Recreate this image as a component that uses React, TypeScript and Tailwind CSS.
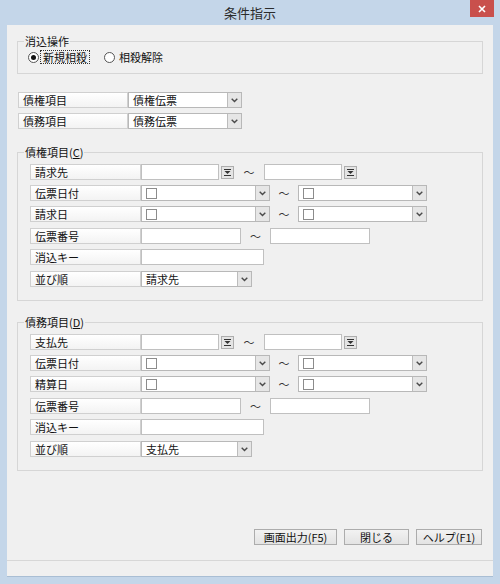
import React from 'react';

const jp = "font-['Noto_Sans_CJK_JP','Noto_Sans_CJK_SC',sans-serif]";

const Chevron: React.FC = () => (
  <svg width="7" height="5" viewBox="0 0 7 5">
    <path d="M0.7 0.8 L3.5 3.6 L6.3 0.8" stroke="#4a4a4a" strokeWidth="1.4" fill="none" />
  </svg>
);

const DropBtn: React.FC = () => (
  <div className="w-[14px] h-[14px] shrink-0 flex items-center justify-center bg-[#e6e6e6] border-l border-[#bcbcbc]">
    <Chevron />
  </div>
);

const Label: React.FC<{ text: React.ReactNode; w?: string }> = ({ text, w = 'w-[111px]' }) => (
  <div
    className={`${w} h-[16px] shrink-0 border border-[#d0d0d0] bg-linear-to-b from-white to-[#f3f3f3] pl-[4px] text-[11px] leading-[14px] text-[#111]`}
  >
    {text}
  </div>
);

const Combo: React.FC<{ w: string; text?: string; check?: boolean }> = ({ w, text, check }) => (
  <div className={`${w} h-[16px] shrink-0 flex items-center border border-[#b8b8b8] bg-white`}>
    <div className="flex-1 flex items-center pl-[4px] text-[11px] leading-[14px] text-[#111]">
      {check && <div className="w-[11px] h-[11px] border border-[#8c8c8c] bg-white" />}
      {text}
    </div>
    <DropBtn />
  </div>
);

const Input: React.FC<{ w: string }> = ({ w }) => (
  <div className={`${w} h-[16px] shrink-0 border border-[#c0c0c0] bg-white`} />
);

const RefBtn: React.FC = () => (
  <div className="ml-[2px] w-[13px] h-[13px] shrink-0 flex items-center justify-center bg-[#e4e4e4] border border-[#adadad]">
    <svg width="7" height="7" viewBox="0 0 7 7">
      <rect x="0" y="0" width="7" height="1" fill="#333" />
      <path d="M0.5 2 L6.5 2 L3.5 5 Z" fill="#333" />
      <rect x="0" y="6" width="7" height="1" fill="#333" />
    </svg>
  </div>
);

const Tilde: React.FC<{ w: string }> = ({ w }) => (
  <div className={`${w} shrink-0 text-center text-[11px] leading-[16px] text-[#333]`}>～</div>
);

const Row: React.FC<{ mt: string; children: React.ReactNode }> = ({ mt, children }) => (
  <div className={`${mt} flex items-center h-[16px]`}>{children}</div>
);

const Group: React.FC<{ title: string; hot: string; party: string; dateLabel: string; mt: string }> = ({
  title,
  hot,
  party,
  dateLabel,
  mt,
}) => (
  <fieldset className={`${mt} ml-[10px] w-[466px] border border-[#d6d6d6] pl-[12px] pb-[13px]`}>
    <legend className="ml-[-6px] px-[1px] text-[11px] leading-[16px] text-[#111]">
      {title}(<span className="underline">{hot}</span>)
    </legend>
    <Row mt="mt-[4px]">
      <Label text={party} />
      <Input w="w-[78px]" />
      <RefBtn />
      <Tilde w="w-[30px]" />
      <Input w="w-[78px]" />
      <RefBtn />
    </Row>
    <Row mt="mt-[5px]">
      <Label text="伝票日付" />
      <Combo w="w-[129px]" check />
      <Tilde w="w-[28px]" />
      <Combo w="w-[129px]" check />
    </Row>
    <Row mt="mt-[5px]">
      <Label text={dateLabel} />
      <Combo w="w-[129px]" check />
      <Tilde w="w-[28px]" />
      <Combo w="w-[129px]" check />
    </Row>
    <Row mt="mt-[6px]">
      <Label text="伝票番号" />
      <Input w="w-[100px]" />
      <Tilde w="w-[29px]" />
      <Input w="w-[100px]" />
    </Row>
    <Row mt="mt-[5px]">
      <Label text="消込キー" />
      <Input w="w-[123px]" />
    </Row>
    <Row mt="mt-[6px]">
      <Label text="並び順" />
      <Combo w="w-[111px]" text={party} />
    </Row>
  </fieldset>
);

const Radio: React.FC<{ on?: boolean }> = ({ on }) => (
  <div className="w-[11px] h-[11px] rounded-full border border-[#555] bg-white flex items-center justify-center shrink-0">
    {on && <div className="w-[5px] h-[5px] rounded-full bg-[#111]" />}
  </div>
);

const Button: React.FC<{ w: string; children: React.ReactNode }> = ({ w, children }) => (
  <div
    className={`${w} h-[16px] border border-[#acacac] bg-linear-to-b from-[#f2f2f2] to-[#e3e3e3] flex items-center justify-center text-[11px] leading-[14px] text-[#111]`}
  >
    {children}
  </div>
);

export default function App() {
  return (
    <div className={`${jp} w-[500px] h-[584px] bg-[#c4d6e9] flex flex-col`}>
      <div className="relative h-[25px] shrink-0 flex items-center justify-center">
        <span className="text-[13px] leading-[16px] text-[#2b2b2b] mt-[1px]">条件指示</span>
        <div className="absolute right-[6px] top-0 w-[24px] h-[17px] bg-[#c9504c] flex items-center justify-center">
          <svg width="8" height="8" viewBox="0 0 8 8">
            <path d="M1 1 L7 7 M7 1 L1 7" stroke="white" strokeWidth="1.6" />
          </svg>
        </div>
      </div>

      <div className="mx-[7px] flex-1 flex flex-col bg-[#f0f0f0] border-b border-[#a9bed4]">
        <fieldset className="mt-[8px] ml-[10px] w-[466px] border border-[#d6d6d6] pl-[10px] pb-[8px]">
          <legend className="ml-[-4px] px-[1px] text-[11px] leading-[16px] text-[#111]">消込操作</legend>
          <div className="h-[16px] flex items-center text-[11px] text-[#111]">
            <Radio on />
            <span className="ml-[1px] px-[2px] border border-dotted border-[#333] leading-[12px]">新規相殺</span>
            <div className="ml-[14px]">
              <Radio />
            </div>
            <span className="ml-[4px] leading-[12px]">相殺解除</span>
          </div>
        </fieldset>

        <div className="mt-[18px] ml-[11px] flex h-[16px]">
          <Label text="債権項目" w="w-[110px]" />
          <Combo w="w-[114px]" text="債権伝票" />
        </div>
        <div className="mt-[5px] ml-[11px] flex h-[16px]">
          <Label text="債務項目" w="w-[110px]" />
          <Combo w="w-[114px]" text="債務伝票" />
        </div>

        <Group mt="mt-[15px]" title="債権項目" hot="C" party="請求先" dateLabel="請求日" />
        <Group mt="mt-[13px]" title="債務項目" hot="D" party="支払先" dateLabel="精算日" />

        <div className="flex-1" />

        <div className="mb-[15px] mr-[11px] flex justify-end gap-[7px]">
          <Button w="w-[83px]">画面出力(F5)</Button>
          <Button w="w-[65px]">閉じる</Button>
          <Button w="w-[66px]">ヘルプ(F1)</Button>
        </div>
        <div className="h-[16px] border-t border-[#d7d7d7]" />
      </div>
      <div className="h-[7px] shrink-0" />
    </div>
  );
}
